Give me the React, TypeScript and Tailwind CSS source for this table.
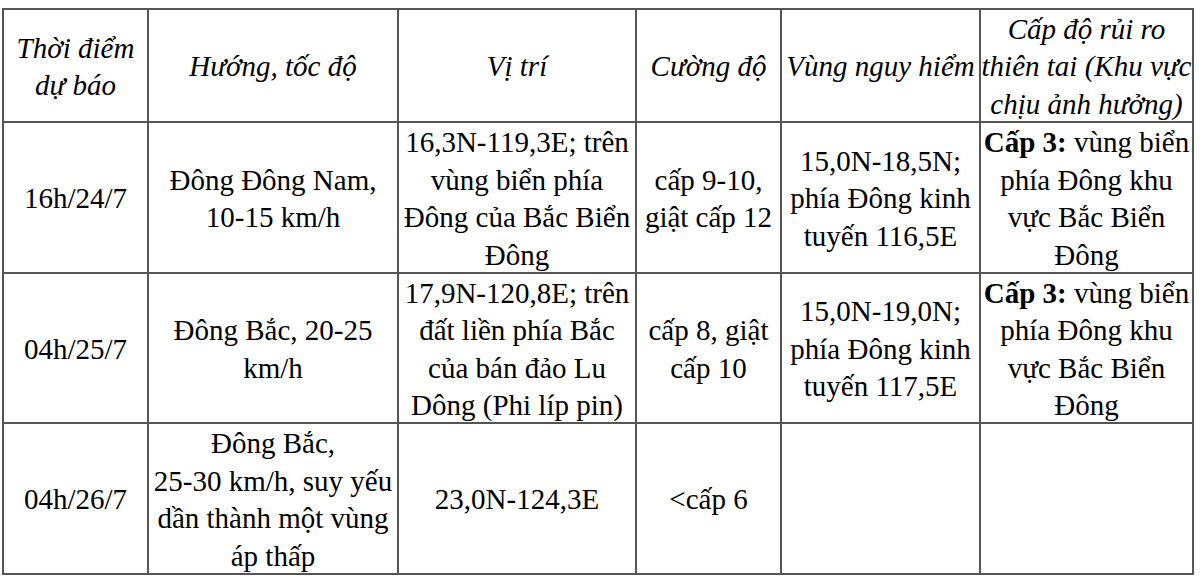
const head = [
  ['Thời điểm', 'dự báo'],
  ['Hướng, tốc độ'],
  ['Vị trí'],
  ['Cường độ'],
  ['Vùng nguy hiểm'],
  ['Cấp độ rủi ro', 'thiên tai (Khu vực', 'chịu ảnh hưởng)'],
]

const rows = [
  [
    ['16h/24/7'],
    ['Đông Đông Nam,', '10-15 km/h'],
    ['16,3N-119,3E; trên', 'vùng biển phía', 'Đông của Bắc Biển', 'Đông'],
    ['cấp 9-10,', 'giật cấp 12'],
    ['15,0N-18,5N;', 'phía Đông kinh', 'tuyến 116,5E'],
    'risk',
  ],
  [
    ['04h/25/7'],
    ['Đông Bắc, 20-25', 'km/h'],
    ['17,9N-120,8E; trên', 'đất liền phía Bắc', 'của bán đảo Lu', 'Dông (Phi líp pin)'],
    ['cấp 8, giật', 'cấp 10'],
    ['15,0N-19,0N;', 'phía Đông kinh', 'tuyến 117,5E'],
    'risk',
  ],
  [
    ['04h/26/7'],
    ['Đông Bắc,', '25-30 km/h, suy yếu', 'dần thành một vùng', 'áp thấp'],
    ['23,0N-124,3E'],
    ['<cấp 6'],
    [],
    [],
  ],
]

function Lines({ lines }: { lines: string[] }) {
  return (
    <>
      {lines.map((l, i) => (
        <span key={i} className="block whitespace-nowrap">
          {l}
        </span>
      ))}
    </>
  )
}

const cell =
  'flex flex-col items-center justify-center text-center border-r-2 border-b-2 border-[#555] px-px pt-[3px]'

export default function App() {
  return (
    <div className="w-[1200px] h-[578px] bg-white pt-[8px] pl-[2px] font-['Liberation_Serif','Times_New_Roman',serif] text-[29px] leading-[37.5px] text-black">
      <div className="grid w-max grid-cols-[145px_250px_238px_145px_199px_213px] grid-rows-[113px_151px_150px_151px] border-l-2 border-t-2 border-[#555]">
        {head.map((h, i) => (
          <div key={i} className={cell + ' italic'}>
            <Lines lines={h} />
          </div>
        ))}
        {rows.map((r, ri) =>
          r.map((c, ci) =>
            c === 'risk' ? (
              <div key={ri + '-' + ci} className={cell}>
                <span className="block whitespace-nowrap">
                  <b>Cấp 3:</b> vùng biển
                </span>
                <Lines lines={['phía Đông khu', 'vực Bắc Biển', 'Đông']} />
              </div>
            ) : (
              <div key={ri + '-' + ci} className={cell}>
                <Lines lines={c as string[]} />
              </div>
            )
          )
        )}
      </div>
    </div>
  )
}
